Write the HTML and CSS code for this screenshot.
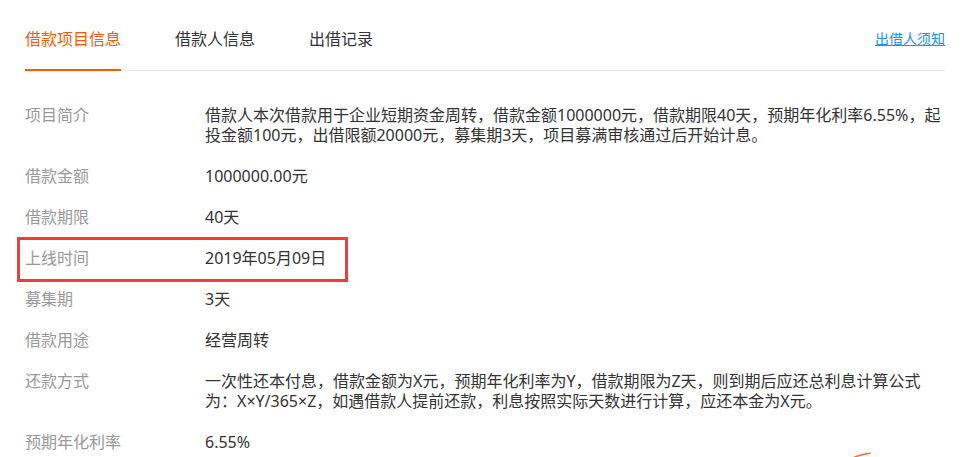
FILE: index.html
```html
<!DOCTYPE html>
<html lang="zh-CN">
<head>
<meta charset="utf-8">
<title>借款项目信息</title>
<link rel="stylesheet" href="styles.css">
</head>
<body>
<div class="page">
  <div class="tabs">
    <div class="tab-list">
      <a class="tab active">借款项目信息</a>
      <a class="tab">借款人信息</a>
      <a class="tab">出借记录</a>
    </div>
    <a class="notice">出借人须知</a>
  </div>
  <dl class="info">
    <div class="row"><dt>项目简介</dt><dd>借款人本次借款用于企业短期资金周转，借款金额1000000元，借款期限40天，预期年化利率6.55%，起投金额100元，出借限额20000元，募集期3天，项目募满审核通过后开始计息。</dd></div>
    <div class="row"><dt>借款金额</dt><dd>1000000.00元</dd></div>
    <div class="row"><dt>借款期限</dt><dd>40天</dd></div>
    <div class="row highlight"><dt>上线时间</dt><dd>2019年05月09日</dd><span class="annot-box"></span></div>
    <div class="row"><dt>募集期</dt><dd>3天</dd></div>
    <div class="row"><dt>借款用途</dt><dd>经营周转</dd></div>
    <div class="row"><dt>还款方式</dt><dd>一次性还本付息，借款金额为X元，预期年化利率为Y，借款期限为Z天，则到期后应还总利息计算公式为：X×Y/365×Z，如遇借款人提前还款，利息按照实际天数进行计算，应还本金为X元。</dd></div>
    <div class="row"><dt>预期年化利率</dt><dd>6.55%</dd></div>
  </dl>
  <svg class="annot-stroke" width="24" height="8" viewBox="0 0 24 8"><path d="M2 8 Q9 5 19 3.6 L20.5 4.6 Q12 6.6 6 8 Z" fill="#ff6a35"/></svg>
</div>
</body>
</html>
```
FILE: styles.css
```css
html, body {
  margin: 0;
  padding: 0;
  background: #fff;
}
body {
  font-family: "Noto Sans", "Noto Sans CJK SC", sans-serif;
  color: #333;
  overflow: hidden;
}
.page {
  position: relative;
  padding-left: 25px;
  height: 457px;
}
.tabs {
  width: 920px;
  height: 70px;
  display: flex;
  justify-content: space-between;
  align-items: flex-start;
  border-bottom: 1px solid #e8e8e8;
}
.tab-list {
  display: flex;
  gap: 54px;
}
.tab {
  display: block;
  font-size: 16px;
  line-height: 20px;
  padding-top: 29px;
  padding-bottom: 20px;
  color: #333;
  border-bottom: 2px solid transparent;
  cursor: pointer;
}
.tab.active {
  color: #ff5a00;
  border-bottom-color: #ff5a00;
}
.notice {
  font-size: 14px;
  line-height: 20px;
  padding-top: 29px;
  color: #1890ff;
  text-decoration: underline;
  cursor: pointer;
}
.info {
  margin: 34px 0 0;
  padding: 0;
}
.row {
  display: flex;
  font-size: 16px;
  line-height: 20px;
  margin-bottom: 21px;
}
.row dt {
  flex: none;
  width: 180px;
  color: #999;
}
.row dd {
  margin: 0;
  width: 746px;
  color: #333;
}
.highlight {
  position: relative;
}
.annot-box {
  position: absolute;
  top: -11px;
  left: -8px;
  width: 331px;
  height: 45px;
  box-sizing: border-box;
  border: 3px solid #f03c3c;
}
.annot-stroke {
  position: absolute;
  left: 851px;
  top: 449px;
}
```
